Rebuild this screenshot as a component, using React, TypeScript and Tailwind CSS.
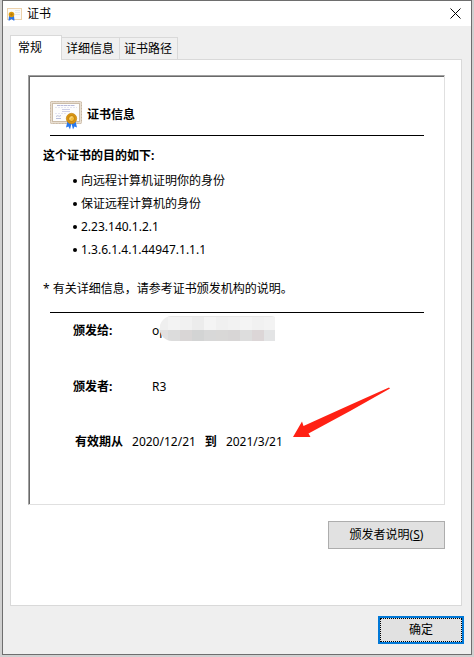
import React, { useState } from "react";

const TABS = ["常规", "详细信息", "证书路径"];

const PURPOSES = [
  "向远程计算机证明你的身份",
  "保证远程计算机的身份",
  "2.23.140.1.2.1",
  "1.3.6.1.4.1.44947.1.1.1",
];

const MOSAIC = [
  ["#efefef", "#f3f3f3", "#f1f1f1", "#ececec", "#f4f4f4", "#f0f0f0", "#f2f2f2", "#f4f4f4", "#f1f1f1", "#f3f3f3"],
  ["#e2e0e0", "#dcdcdc", "#d9d6d6", "#d3d4d4", "#d8d8d8", "#d9d8d7", "#d8d6d6", "#dddddd", "#dcd6d7", "#e3e4e5"],
];

function TitleIcon() {
  return (
    <svg width="16" height="14" viewBox="0 0 16 14" aria-hidden="true">
      <rect x="0.5" y="1.5" width="14" height="11" fill="#fbfaf8" stroke="#ecd2ac" />
      <path d="M8 3.500h5M8 5.500h5M8 7.500h5" stroke="#e6e8ea" />
      <path d="M2 9h2.500v3l-2 1.500H1.500zM4.500 9H7l.5 4.500h-1l-2-1.500z" fill="#2b74ea" />
      <circle cx="4.500" cy="7.500" r="2.800" fill="#dc9a0c" />
      <circle cx="4.500" cy="7.500" r="1.200" fill="#b97806" />
    </svg>
  );
}

function CertificateIcon() {
  return (
    <svg width="32" height="29" viewBox="0 0 32 29" aria-hidden="true">
      <rect x="0.5" y="0.5" width="31" height="22" rx="1" fill="#e9dfd2" stroke="#d9cbb9" />
      <rect x="0.5" y="0.5" width="31" height="22" rx="1" fill="none" stroke="#c3b4a0" strokeDasharray="1 2" />
      <rect x="2.500" y="2.500" width="27" height="18" fill="#fdfdfd" stroke="#cbbca8" />
      <path d="M7 4.500h18" stroke="#b9bbd8" strokeDasharray="3 .5" />
      <path d="M12 8.500h8M12 10.500h8" stroke="#cdcfe6" />
      <path d="M5 6.500h22M5 12.500h12" stroke="#e4e5f1" strokeDasharray="2 1" />
      <path d="M6 15.500c2-2 3 1 5-1M6 17.500h5" stroke="#a4acd0" fill="none" strokeWidth=".8" />
      <path d="M17.500 20 16 26.500l2.500-1 1.500 3 2-8zM25.500 20l1.500 6.500-2.500-1-1.500 3-2-8z" fill="#2878ee" />
      <circle cx="21.500" cy="17.500" r="5.200" fill="#d99512" stroke="#bf7d08" strokeWidth=".6" />
      <circle cx="21.500" cy="17.500" r="3" fill="#f2bd3c" stroke="#b87607" strokeWidth=".8" />
      <path d="M20 18.500c0-2 1-2.500 2.500-2.500" stroke="#fbe3a0" fill="none" />
    </svg>
  );
}

function MosaicBar() {
  return (
    <svg width="115" height="25" viewBox="0 0 115 25" aria-hidden="true">
      <clipPath id="mosaic-shape">
        <path d="M12 0H111L115 1V25H12A12.500 12.500 0 0 1 12 0Z" />
      </clipPath>
      <g clipPath="url(#mosaic-shape)">
        {MOSAIC.map((row, y) =>
          row.map((color, x) => (
            <rect key={`${x}-${y}`} x={x * 12 - 4} y={y === 0 ? 0 : 14} width="12" height="14" fill={color} />
          ))
        )}
        <path d="M0 .5h115" stroke="#e6e6e6" />
      </g>
    </svg>
  );
}

function Arrow() {
  return (
    <svg width="98" height="52" viewBox="0 0 98 52" aria-hidden="true">
      <path d="M0 50 9 34.500 10.500 39Q50 21 96 .5L97 1.500Q58 24 15.500 46.500L17.500 50Z" fill="#ff2114" />
    </svg>
  );
}

export default function App() {
  const [active, setActive] = useState(TABS[0]);

  return (
    <div className="bg-[#d0d0d0] px-[2px] pb-[2px] font-['Noto_Sans','Noto_Sans_CJK_SC',sans-serif] text-xs leading-4 text-black">
      <main className="border border-[#6e6e6e] bg-[#efefef]">
        <header className="flex h-[25px] items-center bg-white pl-1 pr-[10px]">
          <TitleIcon />
          <h1 className="ml-1 flex-1">证书</h1>
          <button aria-label="关闭" className="flex size-3 items-center justify-center">
            <svg width="11" height="11" viewBox="0 0 11 11" aria-hidden="true">
              <path d="M.5.5l10 10M10.500.5l-10 10" stroke="#000" />
            </svg>
          </button>
        </header>

        <div className="pl-[7px] pr-[9px] pt-[9px]">
          <div role="tablist" className="flex items-end">
            {TABS.map((tab) => (
              <button
                key={tab}
                role="tab"
                aria-selected={active === tab}
                onClick={() => setActive(tab)}
                className={
                  active === tab
                    ? "relative -mb-px h-[25px] w-[52px] border border-b-0 border-[#d9d9d9] bg-white pb-px pl-[7px] text-left"
                    : "h-[22px] border border-b-0 border-l-0 border-[#d9d9d9] bg-[#f0f0f0] pl-1 pr-[5px]"
                }
              >
                {tab}
              </button>
            ))}
          </div>

          <section className="border border-[#d9d9d9] bg-white pb-14 pl-[17px] pr-4 pt-[15px]">
            <div className="border border-b-[#e0e0e0] border-l-[#a0a0a0] border-r-[#e0e0e0] border-t-[#a0a0a0]">
              <div className="border-l border-t border-[#696969] pb-[54px] pl-[13px] pr-5 pt-6">
                <div className="ml-[7px] flex gap-[5px] border-b border-black pb-[5px]">
                  <CertificateIcon />
                  <h2 className="mt-1.5 font-bold">证书信息</h2>
                </div>

                <h3 className="mt-3 font-bold">这个证书的目的如下:</h3>
                <ul className="ml-[30px] mt-[5px]">
                  {PURPOSES.map((purpose) => (
                    <li key={purpose} className="flex h-[23px] items-center gap-1">
                      <span className="size-1 rounded-full bg-black" />
                      {purpose}
                    </li>
                  ))}
                </ul>
                <p className="mt-5">* 有关详细信息，请参考证书颁发机构的说明。</p>

                <div className="ml-[7px] mt-[15px] border-t border-black pl-[23px]">
                  <dl>
                    <div className="mt-2.5 flex h-4">
                      <dt className="w-[79px] font-bold">颁发给:</dt>
                      <dd className="flex">
                        op
                        <span className="-ml-[7px] -mt-[7px]">
                          <MosaicBar />
                        </span>
                      </dd>
                    </div>
                    <div className="mt-10 flex h-4">
                      <dt className="w-[79px] font-bold">颁发者:</dt>
                      <dd>R3</dd>
                    </div>
                  </dl>
                  <p className="relative mt-[39px] flex gap-[9px] pl-0.5">
                    <b>有效期从</b>
                    <span>2020/12/21</span>
                    <b>到</b>
                    <span>2021/3/21</span>
                    <span className="absolute bottom-[11px] left-[220px]">
                      <Arrow />
                    </span>
                  </p>
                </div>
              </div>
            </div>

            <div className="mt-4 flex justify-end">
              <button className="h-7 w-[117px] border border-[#adadad] bg-[#e1e1e1]">
                颁发者说明(<u>S</u>)
              </button>
            </div>
          </section>
        </div>

        <footer className="flex justify-end px-[7px] pb-2.5 pt-2.5">
          <button className="h-7 w-[86px] border-2 border-[#0078d7] bg-[#e1e1e1]">
            <span className="flex h-full items-center justify-center border border-dotted border-black">确定</span>
          </button>
        </footer>
      </main>
    </div>
  );
}
